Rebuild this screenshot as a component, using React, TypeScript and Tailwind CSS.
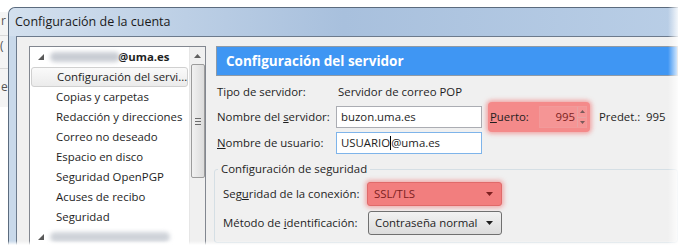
const treeItems = [
  'Configuración del servi...',
  'Copias y carpetas',
  'Redacción y direcciones',
  'Correo no deseado',
  'Espacio en disco',
  'Seguridad OpenPGP',
  'Acuses de recibo',
  'Seguridad',
]

function Caret() {
  return (
    <svg width="7" height="4" viewBox="0 0 7 4" className="shrink-0">
      <path d="M0 0h7L3.5 4z" fill="currentColor" />
    </svg>
  )
}

function Expander() {
  return (
    <svg width="6" height="6" viewBox="0 0 6 6" className="shrink-0">
      <path d="M6 0v6H0z" fill="#595959" />
    </svg>
  )
}

export default function App() {
  return (
    <div className="relative w-[680px] h-[245px] overflow-hidden bg-white font-['Open_Sans','Noto_Sans',sans-serif] text-[11.4px] text-[#1e1e1e] whitespace-nowrap">
      {/* window behind, peeking out on the left */}
      <div className="absolute left-0 top-[12px] w-[10px] h-[95px] overflow-hidden bg-[#f4f4f4] border-r border-[#d0d6de] text-[#555] leading-none">
        <div className="mt-[3px] pl-[1px] text-[12px]">r</div>
        <div className="mt-[8px] border-t border-[#d8d8d8] pt-[4px] text-[12px]">(</div>
        <div className="mt-[16px] border-t border-[#d8d8d8] pt-[12px] pl-[1px] text-[12px]">e</div>
      </div>

      {/* main window */}
      <div className="absolute left-[8px] top-[7px] w-[670px] h-[250px] rounded-tl-[7px] border-l border-t border-[#5b6b7e] bg-[#c9d9ea] flex flex-col">
        <div className="h-[28px] shrink-0 flex items-center pl-[6px] rounded-tl-[7px] bg-gradient-to-r from-[#d3e0ee] via-[#a8c0dd] to-[#b9cee6] text-[12.5px] text-[#1a1a1a]">
          Configuración de la cuenta
        </div>
        <div className="flex-1 ml-[7px] border-t border-l border-[#6c7a8c] bg-[#f0f0f0] flex pt-[9px] pl-[12px]">
          {/* account tree */}
          <div className="w-[177px] h-[220px] shrink-0 border border-[#828790] bg-white flex">
            <div className="flex-1 min-w-0 pl-[1px]">
              <div className="h-[20px] flex items-center pl-[7px] gap-[6px]">
                <Expander />
                <span className="w-[70px] h-[10px] rounded-full bg-[#c9cdd4] blur-[2px]" />
                <span className="-ml-[8px] font-bold">@uma.es</span>
              </div>
              {treeItems.map((item, i) => (
                <div
                  key={item}
                  className={`h-[20px] flex items-center pl-[25px] ${
                    i === 0 ? 'mr-[1px] pl-[24px] rounded-[3px] border border-[#d0d0d0] bg-gradient-to-b from-[#fafafa] to-[#ebebeb]' : ''
                  }`}
                >
                  {item}
                </div>
              ))}
              <div className="h-[20px] flex items-center pl-[7px] gap-[6px]">
                <Expander />
                <span className="w-[120px] h-[10px] rounded-full bg-[#cfd3d9] blur-[2px]" />
              </div>
            </div>
            {/* scrollbar */}
            <div className="w-[16px] shrink-0 bg-[#f0f0f0] border-l border-[#e6e6e6] flex flex-col items-center">
              <div className="h-[17px] flex items-center justify-center text-[#606060]">
                <svg width="7" height="4" viewBox="0 0 7 4">
                  <path d="M0 4h7L3.5 0z" fill="currentColor" />
                </svg>
              </div>
              <div className="w-[14px] h-[114px] rounded-[2px] border border-[#9c9c9c] bg-gradient-to-r from-[#f1f1f1] to-[#dcdcdc] flex flex-col items-center justify-center gap-[2px]">
                <span className="w-[6px] h-px bg-[#6b6b6b]" />
                <span className="w-[6px] h-px bg-[#6b6b6b]" />
                <span className="w-[6px] h-px bg-[#6b6b6b]" />
              </div>
            </div>
          </div>

          {/* server settings */}
          <div className="flex-1 ml-[10px] flex flex-col">
            <div className="h-[30px] border border-[#8f9aa6] bg-[#3f96f3] flex items-center pl-[9px] text-[13.5px] font-bold text-white">
              Configuración del servidor
            </div>

            <div className="mt-[7px] h-[18px] flex items-center pl-[1px]">
              <span className="w-[121px]">Tipo de servidor:</span>
              <span>Servidor de correo POP</span>
            </div>

            <div className="mt-[2px] h-[28px] flex items-center pl-[1px]">
              <span className="w-[119px]">
                Nombre del <u>s</u>ervidor:
              </span>
              <div className="w-[146px] h-[22px] border border-[#abadb3] bg-white flex items-center px-[4px]">
                buzon.uma.es
              </div>
              <div className="ml-[6px] h-[30px] w-[102px] rounded-[4px] bg-[#f48a8a] shadow-[0_0_4px_2px_rgba(240,110,110,0.55)] flex items-center pl-[2px] pr-[3px]">
                <span className="w-[49px]">
                  <u>P</u>uerto:
                </span>
                <div className="flex-1 h-[22px] border border-[#f29a9a] bg-[#f59595] flex items-center">
                  <span className="flex-1 text-right pr-[2px] text-[#7d1f1f]">995</span>
                  <div className="w-[9px] h-[20px] flex flex-col border-l border-[#e7a3a3] text-[#7a5a5a]">
                    <div className="flex-1 flex items-center justify-center border-b border-[#e7a3a3]">
                      <svg width="5" height="3" viewBox="0 0 5 3">
                        <path d="M0 3h5L2.5 0z" fill="currentColor" />
                      </svg>
                    </div>
                    <div className="flex-1 flex items-center justify-center">
                      <svg width="5" height="3" viewBox="0 0 5 3">
                        <path d="M0 0h5L2.5 3z" fill="currentColor" />
                      </svg>
                    </div>
                  </div>
                </div>
              </div>
              <span className="ml-[9px] w-[47px]">Predet.:</span>
              <span>995</span>
            </div>

            <div className="h-[24px] flex items-center pl-[1px]">
              <span className="w-[119px]">
                <u>N</u>ombre de usuario:
              </span>
              <div className="w-[146px] h-[22px] border border-[#7eb4ea] bg-white flex items-center px-[4px]">
                USUARIO<span className="inline-block w-px h-[14px] bg-black" />@uma.es
              </div>
            </div>

            <div className="relative mt-[14px] -ml-[2px] h-[74px] rounded-[3px] border border-[#d5dfe5] pt-[12px] pl-[8px]">
              <span className="absolute -top-[10px] left-[3px] bg-[#f0f0f0] px-[3px]">Configuración de seguridad</span>
              <div className="h-[24px] flex items-center">
                <span className="w-[144px]">
                  Seg<u>u</u>ridad de la conexión:
                </span>
                <div className="w-[135px] h-[24px] rounded-[3px] bg-[#f27e7e] border border-[#e06a6a] shadow-[0_0_4px_2px_rgba(240,110,110,0.5)] flex items-center justify-between pl-[6px] pr-[8px] text-[#7d1f1f]">
                  SSL/TLS
                  <Caret />
                </div>
              </div>
              <div className="mt-[5px] h-[24px] flex items-center">
                <span className="w-[145px]">
                  Método de <u>i</u>dentificación:
                </span>
                <div className="w-[134px] h-[24px] rounded-[3px] border border-[#707070] bg-gradient-to-b from-[#f2f2f2] to-[#dcdcdc] flex items-center justify-between pl-[6px] pr-[8px]">
                  Contraseña normal
                  <Caret />
                </div>
              </div>
            </div>
          </div>
        </div>
      </div>

      {/* soft fade on the right and bottom edges */}
      <div className="absolute right-0 top-0 w-[12px] h-full bg-gradient-to-r from-transparent to-white" />
      <div className="absolute left-0 bottom-0 w-full h-[4px] bg-gradient-to-b from-transparent to-white" />
    </div>
  )
}
